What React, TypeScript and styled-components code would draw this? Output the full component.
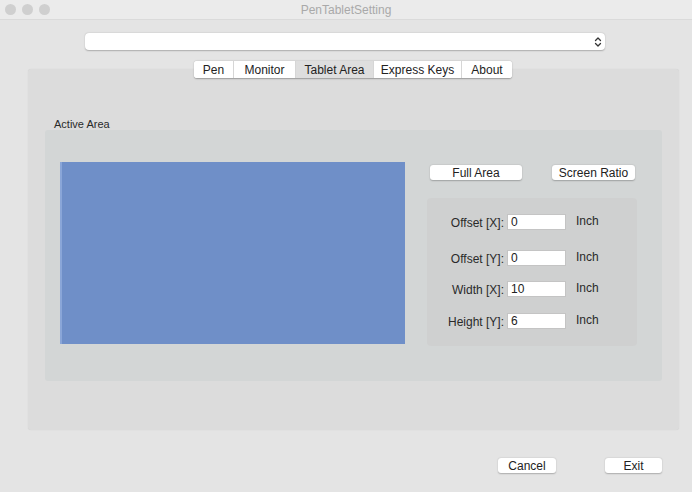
import { Fragment } from 'react'
import styled, { createGlobalStyle } from 'styled-components'

const GlobalStyle = createGlobalStyle`
  html, body {
    margin: 0;
    padding: 0;
    background: #e4e4e4;
  }
  body {
    font-family: "Liberation Sans", "Noto Sans", Arial, sans-serif;
    font-size: 12px;
    color: #2a2a2a;
  }
`

const Window = styled.div`
  width: 692px;
  height: 492px;
  background: #e4e4e4;
  display: flex;
  flex-direction: column;
  overflow: hidden;
`

const TitleBar = styled.div`
  height: 20px;
  flex: none;
  display: grid;
  grid-template-columns: 80px 1fr 80px;
  align-items: center;
  background: #ebebeb;
  border-bottom: 1px solid #dadada;
  box-sizing: border-box;
`

const Lights = styled.div`
  display: flex;
  gap: 6px;
  padding-left: 5px;
`

const Light = styled.span`
  width: 11px;
  height: 11px;
  border-radius: 50%;
  background: #cfcfcf;
`

const Title = styled.div`
  text-align: center;
  color: #a9a9a9;
  font-size: 12px;
`

const Popup = styled.div`
  margin: 13px 0 0 85px;
  width: 520px;
  height: 17px;
  background: #fff;
  border-radius: 4px;
  box-shadow: 0 0.5px 1.5px rgba(0, 0, 0, 0.25);
  display: flex;
  justify-content: flex-end;
  align-items: center;
  padding-right: 2px;
  box-sizing: border-box;
`

const TabBar = styled.div`
  margin: 11px 0 0 194px;
  display: flex;
  align-self: flex-start;
  position: relative;
  z-index: 1;
  background: #fff;
  border-radius: 3px;
  box-shadow: 0 0.5px 1.5px rgba(0, 0, 0, 0.3);
  overflow: hidden;
`

const Tab = styled.div<{ $active?: boolean; $w: number }>`
  width: ${({ $w }) => $w}px;
  height: 17px;
  display: flex;
  align-items: center;
  justify-content: center;
  background: ${({ $active }) => ($active ? '#dedede' : '#fff')};
  border-left: 1px solid #d6d6d6;
  box-sizing: border-box;
  color: #222;
  &:first-child {
    border-left: none;
  }
`

const Panel = styled.div`
  margin: -9px 0 0 28px;
  width: 651px;
  height: 361px;
  background: #dcdcdc;
  border-radius: 3px;
  box-shadow: 0 0 1px rgba(0, 0, 0, 0.12);
  padding: 49px 17px 0 17px;
  box-sizing: border-box;
`

const GroupLabel = styled.div`
  font-size: 11px;
  margin-left: 9px;
  height: 12px;
  color: #2a2a2a;
`

const Group = styled.div`
  width: 617px;
  height: 251px;
  background: #d3d6d6;
  border-radius: 3px;
  box-sizing: border-box;
  padding: 32px 0 0 15px;
  display: flex;
  gap: 22px;
`

const AreaPreview = styled.div`
  width: 345px;
  height: 182px;
  background: #6f8fc8;
  border-left: 2px solid #8aa6d8;
  box-sizing: border-box;
`

const Side = styled.div`
  display: flex;
  flex-direction: column;
  padding-top: 3px;
`

const ButtonRow = styled.div`
  display: flex;
  gap: 30px;
  padding-left: 3px;
`

const Button = styled.div<{ $w: number }>`
  width: ${({ $w }) => $w}px;
  height: 15px;
  background: #fff;
  border-radius: 3px;
  box-shadow: 0 0.5px 1.5px rgba(0, 0, 0, 0.25);
  display: flex;
  align-items: center;
  justify-content: center;
  color: #222;
  font-size: 12px;
`

const FieldBox = styled.div`
  margin-top: 18px;
  width: 210px;
  height: 148px;
  background: #cfd0d0;
  border-radius: 4px;
  box-sizing: border-box;
  padding-top: 16px;
  display: flex;
  flex-direction: column;
`

const FieldRow = styled.div<{ $top: number }>`
  margin-top: ${({ $top }) => $top}px;
  display: grid;
  grid-template-columns: 80px 59px auto;
  height: 16px;
  align-items: center;
`

const FieldLabel = styled.div`
  text-align: right;
  padding-right: 3px;
  margin-top: 2px;
  color: #2a2a2a;
`

const Input = styled.div`
  height: 16px;
  background: #fff;
  border: 1px solid #c4c4c4;
  box-sizing: border-box;
  padding-left: 3px;
  display: flex;
  align-items: center;
  color: #222;
`

const Unit = styled.div`
  padding-left: 10px;
  margin-top: -2px;
  color: #2a2a2a;
`

const Footer = styled.div`
  margin-top: 28px;
  display: flex;
  gap: 49px;
  padding-left: 498px;
`

const fields = [
  { label: 'Offset [X]:', value: '0', top: 0 },
  { label: 'Offset [Y]:', value: '0', top: 20 },
  { label: 'Width [X]:', value: '10', top: 15 },
  { label: 'Height [Y]:', value: '6', top: 16 },
]

const tabs = [
  { name: 'Pen', w: 39 },
  { name: 'Monitor', w: 62 },
  { name: 'Tablet Area', w: 78, active: true },
  { name: 'Express Keys', w: 88 },
  { name: 'About', w: 51 },
]

function Chevrons() {
  return (
    <svg width="10" height="12" viewBox="0 0 10 12">
      <path d="M2.5 4.5 L5 2 L7.5 4.5" fill="none" stroke="#333" strokeWidth="1.3" strokeLinecap="round" strokeLinejoin="round" />
      <path d="M2.5 7.5 L5 10 L7.5 7.5" fill="none" stroke="#333" strokeWidth="1.3" strokeLinecap="round" strokeLinejoin="round" />
    </svg>
  )
}

export default function App() {
  return (
    <>
      <GlobalStyle />
      <Window>
        <TitleBar>
          <Lights>
            <Light />
            <Light />
            <Light />
          </Lights>
          <Title>PenTabletSetting</Title>
          <div />
        </TitleBar>

        <Popup>
          <Chevrons />
        </Popup>

        <TabBar>
          {tabs.map((t) => (
            <Tab key={t.name} $w={t.w} $active={t.active}>
              {t.name}
            </Tab>
          ))}
        </TabBar>

        <Panel>
          <GroupLabel>Active Area</GroupLabel>
          <Group>
            <AreaPreview />
            <Side>
              <ButtonRow>
                <Button $w={92}>Full Area</Button>
                <Button $w={83}>Screen Ratio</Button>
              </ButtonRow>
              <FieldBox>
                {fields.map((f) => (
                  <Fragment key={f.label}>
                    <FieldRow $top={f.top}>
                      <FieldLabel>{f.label}</FieldLabel>
                      <Input>{f.value}</Input>
                      <Unit>Inch</Unit>
                    </FieldRow>
                  </Fragment>
                ))}
              </FieldBox>
            </Side>
          </Group>
        </Panel>

        <Footer>
          <Button $w={58}>Cancel</Button>
          <Button $w={57}>Exit</Button>
        </Footer>
      </Window>
    </>
  )
}
